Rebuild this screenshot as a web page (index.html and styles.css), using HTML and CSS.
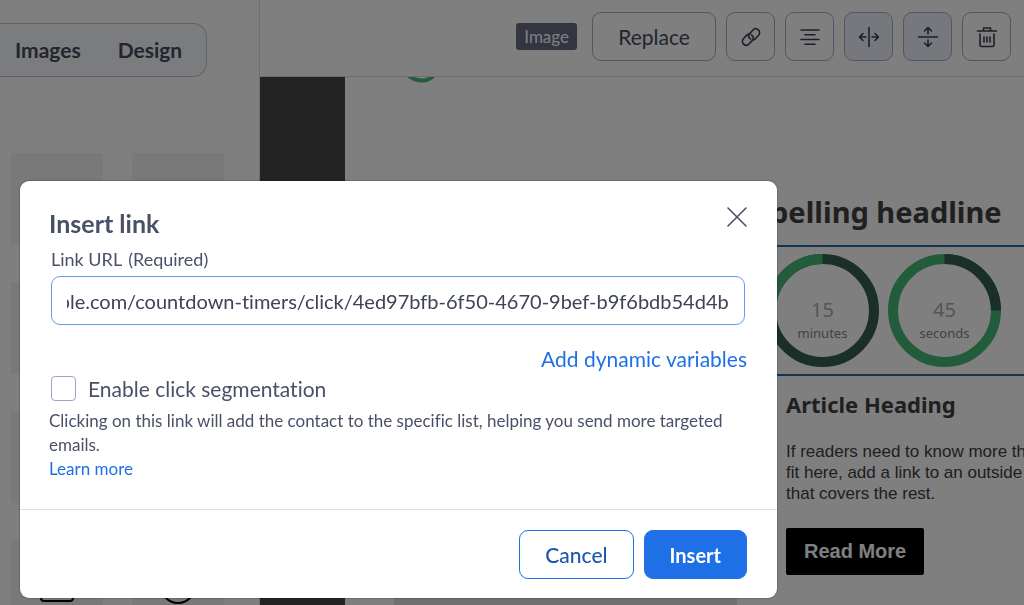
FILE: index.html
```html
<!DOCTYPE html>
<html lang="en">
<head>
<meta charset="utf-8">
<meta name="viewport" content="width=device-width, initial-scale=1">
<title>Insert link</title>
<link rel="stylesheet" href="styles.css">
</head>
<body>
<div class="app">
  <aside class="sidebar">
    <nav class="tabs">
      <button class="tab" type="button">Images</button>
      <button class="tab" type="button">Design</button>
    </nav>
    <div class="tiles">
      <div class="tile"></div><div class="tile"></div>
      <div class="tile"></div><div class="tile"></div>
      <div class="tile"></div><div class="tile"></div>
      <div class="tile"><svg width="36" height="64" viewBox="0 0 36 64" fill="none" stroke="#000" stroke-width="2"><rect x="2" y="35" width="32" height="26" rx="3"/></svg></div>
      <div class="tile"><svg width="36" height="66" viewBox="0 0 36 66" fill="none" stroke="#000" stroke-width="2"><circle cx="18" cy="46" r="17"/></svg></div>
    </div>
  </aside>
  <main class="main">
    <div class="toolbar">
      <span class="tag">Image</span>
      <button class="tool tool-wide" type="button">Replace</button>
      <button class="tool" type="button" aria-label="Link"><svg width="24" height="24" viewBox="0 0 24 24"><path d="M11.600 14c-2.200-1.200-2.600-3.700-1-5.400l3.200-3.400c1.600-1.700 4-1.800 5.600-.3s1.600 3.900 0 5.600l-3.200 3.400c-.6.6-1.200 1-2 1.100M12.400 10c2.200 1.200 2.600 3.700 1 5.400l-3.200 3.400c-1.600 1.700-4 1.800-5.600.3s-1.600-3.900 0-5.600l3.200-3.400c.6-.6 1.200-1 2-1.100"/></svg></button>
      <button class="tool" type="button" aria-label="Align"><svg width="24" height="24" viewBox="0 0 24 24"><path d="M3 5h18M7 9.700h10M3 14.500h18M7 19.200h10"/></svg></button>
      <button class="tool tool-on" type="button" aria-label="Full width"><svg width="24" height="24" viewBox="0 0 24 24"><path d="M12 2.500v19M9 12H2.500M6 8.500L2.500 12 6 15.500M21.500 12H15M18 8.500l3.500 3.500-3.500 3.500"/></svg></button>
      <button class="tool tool-on" type="button" aria-label="Vertical spacing"><svg width="24" height="24" viewBox="0 0 24 24"><path d="M2.500 12h19M12 9V2.500M8.500 6L12 2.500 15.500 6M12 15v6.500M8.500 18l3.500 3.500 3.500-3.500"/></svg></button>
      <button class="tool" type="button" aria-label="Delete"><svg width="24" height="24" viewBox="0 0 24 24"><path d="M2.500 6h19M8.500 6V3h7v3M5 9v11q0 1.500 1.500 1.500h11q1.500 0 1.500-1.500V9M9 12v5M12 12v5M15 12v5"/></svg></button>
    </div>
    <div class="canvas">
      <div class="email">
        <svg class="logo" width="60" height="6" viewBox="0 0 60 6" fill="none"><path d="M14-2Q20 3.600 29 3.600 36 3.400 41-3" stroke="#47b876" stroke-width="4"/></svg>
        <h1 class="headline">Begin with a compelling headline</h1>
        <div class="timers">
          <div class="timer"><svg viewBox="0 0 112 112"><circle class="ring-dark" cx="56" cy="56" r="51"/></svg><span class="num">02</span><span class="unit">days</span></div>
          <div class="timer"><svg viewBox="0 0 112 112"><circle class="ring-dark" cx="56" cy="56" r="51"/></svg><span class="num">10</span><span class="unit">hours</span></div>
          <div class="timer"><svg viewBox="0 0 112 112"><circle class="ring-dark" cx="56" cy="56" r="51"/><path class="ring-green" d="M5 56A51 51 0 0 1 56 5"/></svg><span class="num">15</span><span class="unit">minutes</span></div>
          <div class="timer"><svg viewBox="0 0 112 112"><circle class="ring-green" cx="56" cy="56" r="51"/><path class="ring-dark" d="M56 5A51 51 0 0 1 107 56"/></svg><span class="num">45</span><span class="unit">seconds</span></div>
        </div>
        <div class="columns">
          <div class="column"></div>
          <div class="column">
            <h2 class="article-title">Article Heading</h2>
            <p class="article-text">If readers need to know more than can<br>fit here, add a link to an outside page<br>that covers the rest.</p>
            <a class="read-more" href="#">Read More</a>
          </div>
        </div>
        <div class="picture"></div>
      </div>
    </div>
  </main>
</div>
<div class="overlay">
  <form class="modal" role="dialog" aria-labelledby="modal-title">
    <div class="modal-body">
      <header class="modal-head">
        <h2 class="modal-title" id="modal-title">Insert link</h2>
        <button class="close" type="button" aria-label="Close"><svg width="20" height="20" viewBox="0 0 20 20"><path d="M1 1l18 18M19 1L1 19"/></svg></button>
      </header>
      <label class="field-label" for="url">Link URL <span class="required">(Required)</span></label>
      <input class="field" id="url" type="text" value="https://example.com/countdown-timers/click/4ed97bfb-6f50-4670-9bef-b9f6bdb54d4b">
      <a class="variables" href="#">Add dynamic variables</a>
      <div class="check-row">
        <input class="check" id="segment" type="checkbox">
        <label class="check-label" for="segment">Enable click segmentation</label>
      </div>
      <p class="hint">Clicking on this link will add the contact to the specific list, helping you send more targeted emails.</p>
      <a class="learn" href="#">Learn more</a>
    </div>
    <footer class="modal-foot">
      <button class="btn btn-outline" type="button">Cancel</button>
      <button class="btn btn-primary" type="submit">Insert</button>
    </footer>
  </form>
</div>
<script src="main.js"></script>
</body>
</html>
```

FILE: styles.css
```css
* { box-sizing: border-box; }
body {
  margin: 0;
  font-family: Lato, "Open Sans", sans-serif;
  font-variant-ligatures: none;
  color: #3b3f4e;
  background: #fff;
}
h1, h2, p { margin: 0; }
a { text-decoration: none; }
button, input { font-family: inherit; font-variant-ligatures: none; }

.app { display: flex; height: 100vh; overflow: hidden; }
.sidebar {
  flex: none;
  width: 260px;
  padding-top: 23px;
  border-right: 1px solid #dcdcdc;
}
.tabs {
  display: flex;
  gap: 37px;
  width: 207px;
  height: 54px;
  padding-left: 15px;
  background: #f7f9fc;
  border: 1px solid #c0c4d6;
  border-left: 0;
  border-radius: 0 14px 14px 0;
}
.tab {
  padding: 0 0 2px;
  border: 0;
  background: none;
  color: #464b5e;
  font-size: 21px;
  font-weight: 700;
}
.tiles {
  display: grid;
  grid-template-columns: 92px 92px;
  grid-auto-rows: 92px;
  gap: 37px 29px;
  padding: 76px 0 0 11px;
}
.tile { display: flex; justify-content: center; background: #f3f3f3; }

.main { display: flex; flex: 1; flex-direction: column; min-width: 0; }
.toolbar {
  display: flex;
  flex: none;
  align-items: center;
  justify-content: flex-end;
  gap: 10px;
  height: 77px;
  padding: 0 13px 3px 0;
  border-bottom: 1px solid #dcdcdc;
}
.tag {
  margin-right: 5px;
  padding: 0 8px;
  border-radius: 3px;
  background: #666b80;
  color: #fff;
  font-size: 17px;
  line-height: 27px;
}
.tool {
  display: flex;
  align-items: center;
  justify-content: center;
  width: 49px;
  height: 49px;
  padding: 0;
  border: 1px solid #a3aaca;
  border-radius: 9px;
  background: none;
  color: #464b5e;
  font-size: 21px;
}
.tool svg { fill: none; stroke: #3b3f50; stroke-width: 1.600; stroke-linecap: round; stroke-linejoin: round; }
.tool-wide { width: 124px; }
.tool-on { background: #eef1fb; }

.canvas { flex: 1; padding-left: 85px; background: #464646; overflow: hidden; }
.email { width: 833px; min-height: 100%; background: #fff; font-family: "Liberation Sans", Arial, sans-serif; }
.logo { display: block; margin-left: 49px; }
.headline {
  padding: 106px 0 10px;
  color: #404040;
  font-family: "Noto Sans", sans-serif;
  font-size: 29px;
  line-height: 46px;
  text-align: center;
}
.timers {
  display: flex;
  justify-content: center;
  gap: 9px;
  padding: 7px 0;
  border: solid #2a6aa8;
  border-width: 2px 0;
}
.timer {
  display: grid;
  width: 113px;
  height: 113px;
  font-family: "Noto Sans", sans-serif;
  text-align: center;
}
.timer > * { grid-area: 1 / 1; }
.timer svg { width: 113px; height: 113px; fill: none; stroke-width: 10; }
.ring-dark { stroke: #35604f; }
.ring-green { stroke: #47b876; }
.num { padding-top: 42px; color: #acacac; font-size: 20px; line-height: 28px; }
.unit { padding-top: 68px; color: #868686; font-size: 13px; line-height: 22px; }
.columns { display: grid; grid-template-columns: 1fr 1fr; gap: 49px; padding: 12px 49px 23px; }
.article-title { color: #404040; font-family: "Noto Sans", sans-serif; font-size: 22px; line-height: 32px; }
.article-text { padding: 21px 0 24px; color: #404040; font-size: 17px; line-height: 21px; }
.read-more {
  display: inline-block;
  padding: 0 18px;
  border-radius: 2px;
  background: #000;
  color: #fff;
  font-size: 20px;
  font-weight: 700;
  line-height: 47px;
}
.picture { width: 343px; height: 120px; margin-left: 49px; background: #e0e0e0; }

.overlay { position: fixed; inset: 0; padding: 181px 20px 0; background: rgba(0, 0, 0, 0.5); }
.modal {
  max-width: 757px;
  border-radius: 9px;
  background: #fff;
  box-shadow: 0 0 2px rgba(0, 0, 0, 0.5);
  color: #4a5068;
}
.modal-body { display: flex; flex-direction: column; padding: 24px 30px 29px 29px; }
.modal-head { display: flex; justify-content: space-between; }
.modal-title { font-size: 25px; line-height: 36px; font-weight: 700; }
.close { width: 20px; height: 24px; padding: 0; border: 0; background: none; }
.close svg { display: block; fill: none; stroke: #4a5068; stroke-width: 1.600; stroke-linecap: round; }
.field-label { padding: 8px 2px 7px; font-size: 18px; line-height: 20px; }
.required { margin-left: 2px; }
.field {
  width: auto;
  height: 49px;
  margin: 0 2px;
  padding: 0 15px;
  border: 1px solid #629bf2;
  border-radius: 9px;
  background: #fff;
  color: #3d4358;
  font-size: 20px;
}
.variables { align-self: flex-end; padding-top: 21px; color: #1f70e6; font-size: 21px; line-height: 26px; }
.check-row { display: flex; align-items: center; gap: 12px; padding: 4px 2px; }
.check {
  width: 25px;
  height: 25px;
  margin: 0;
  appearance: none;
  border: 1px solid #9aa5c9;
  border-radius: 4px;
  background: #fff;
}
.check-label { font-size: 21px; line-height: 25px; }
.hint { padding-top: 4px; font-size: 17px; line-height: 24px; }
.learn { align-self: flex-start; color: #1f70e6; font-size: 17px; line-height: 23px; }
.modal-foot {
  display: flex;
  justify-content: flex-end;
  gap: 10px;
  padding: 20px 30px 19px;
  border-top: 1px solid #d7dfe8;
}
.btn { height: 49px; padding: 0 25px; border: 1px solid #1f70e6; border-radius: 9px; font-size: 21px; font-weight: 500; }
.btn-outline { background: #fff; color: #1d58ac; }
.btn-primary { background: #1f70e6; color: #fff; font-size: 20px; font-weight: 700; }
```

FILE: main.js
```js
const url = document.getElementById("url");
url.scrollLeft = url.scrollWidth;
```
